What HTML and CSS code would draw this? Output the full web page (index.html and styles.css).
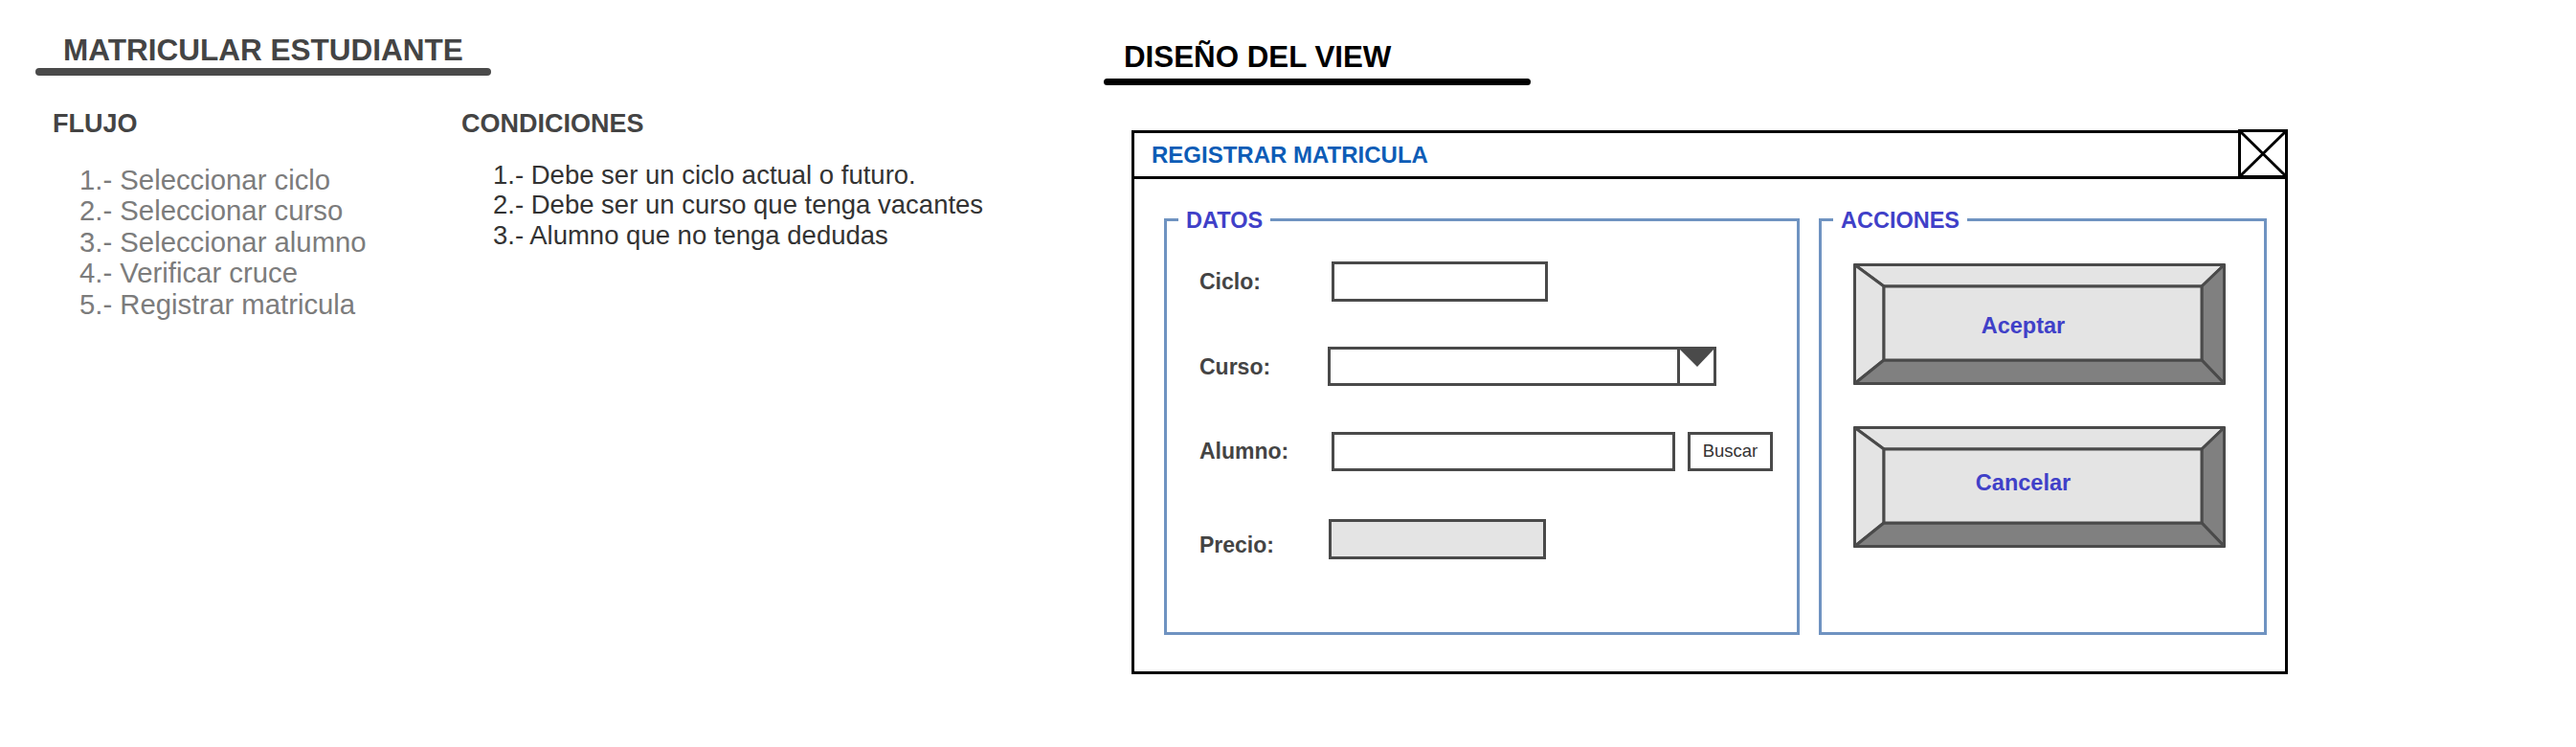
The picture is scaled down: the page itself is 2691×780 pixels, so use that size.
FILE: index.html
```html
<!DOCTYPE html>
<html lang="es">
<head>
<meta charset="utf-8">
<title>Matricular estudiante</title>
<link rel="stylesheet" href="styles.css">
</head>
<body>
<div class="page">
  <section class="spec">
    <h1 class="spec-title">MATRICULAR ESTUDIANTE</h1>
    <div class="rule rule-gray"></div>
    <div class="spec-cols">
      <div class="col col-flujo">
        <h2 class="col-title">FLUJO</h2>
        <ol class="steps">
          <li>1.- Seleccionar ciclo</li>
          <li>2.- Seleccionar curso</li>
          <li>3.- Seleccionar alumno</li>
          <li>4.- Verificar cruce</li>
          <li>5.- Registrar matricula</li>
        </ol>
      </div>
      <div class="col col-cond">
        <h2 class="col-title">CONDICIONES</h2>
        <ol class="conds">
          <li>1.- Debe ser un ciclo actual o futuro.</li>
          <li>2.- Debe ser un curso que tenga vacantes</li>
          <li>3.- Alumno que no tenga dedudas</li>
        </ol>
      </div>
    </div>
  </section>

  <section class="design">
    <h1 class="design-title">DISEÑO DEL VIEW</h1>
    <div class="rule rule-black"></div>

    <div class="window">
      <div class="titlebar">REGISTRAR MATRICULA</div>
      <div class="close-box">
        <svg width="52" height="51" viewBox="0 0 52 51">
          <rect x="1.5" y="1.5" width="49" height="48" fill="#fff" stroke="#000" stroke-width="3"/>
          <line x1="2" y1="2" x2="50" y2="49" stroke="#000" stroke-width="3"/>
          <line x1="50" y1="2" x2="2" y2="49" stroke="#000" stroke-width="3"/>
        </svg>
      </div>
      <div class="win-body">
        <fieldset class="group group-datos">
          <legend>DATOS</legend>
          <div class="form">
            <label class="lbl">Ciclo:</label>
            <input class="field field-ciclo" type="text">

            <label class="lbl">Curso:</label>
            <div class="select">
              <span class="select-arrow">
                <svg width="35" height="18" viewBox="0 0 35 18"><polygon points="0,0 35,0 18,18" fill="#4a4a4a"/></svg>
              </span>
            </div>

            <label class="lbl">Alumno:</label>
            <div class="field-row">
              <input class="field field-alumno" type="text">
              <button class="btn-buscar" type="button">Buscar</button>
            </div>

            <label class="lbl lbl-last">Precio:</label>
            <input class="field field-precio" type="text" disabled>
          </div>
        </fieldset>

        <fieldset class="group group-acciones">
          <legend>ACCIONES</legend>
          <div class="actions">
            <button class="bevel" type="button">
              <svg class="bevel-bg" width="389" height="127" viewBox="0 0 389 127">
                <g stroke="#4a4a4a" stroke-width="3" stroke-linejoin="round">
                  <polygon points="1.5,1.5 387.5,1.5 364,24 32,24" fill="#e4e4e4"/>
                  <polygon points="1.5,1.5 32,24 32,101 1.5,125.5" fill="#e4e4e4"/>
                  <polygon points="387.5,1.5 387.5,125.5 364,101 364,24" fill="#808080"/>
                  <polygon points="1.5,125.5 32,101 364,101 387.5,125.5" fill="#808080"/>
                  <rect x="32" y="24" width="332" height="77" fill="#e4e4e4"/>
                </g>
              </svg>
              <span class="bevel-text">Aceptar</span>
            </button>
            <button class="bevel" type="button">
              <svg class="bevel-bg" width="389" height="127" viewBox="0 0 389 127">
                <g stroke="#4a4a4a" stroke-width="3" stroke-linejoin="round">
                  <polygon points="1.5,1.5 387.5,1.5 364,24 32,24" fill="#e4e4e4"/>
                  <polygon points="1.5,1.5 32,24 32,101 1.5,125.5" fill="#e4e4e4"/>
                  <polygon points="387.5,1.5 387.5,125.5 364,101 364,24" fill="#808080"/>
                  <polygon points="1.5,125.5 32,101 364,101 387.5,125.5" fill="#808080"/>
                  <rect x="32" y="24" width="332" height="77" fill="#e4e4e4"/>
                </g>
              </svg>
              <span class="bevel-text bevel-text-up">Cancelar</span>
            </button>
          </div>
        </fieldset>
      </div>
    </div>
  </section>
</div>
</body>
</html>
```

FILE: styles.css
```css
* { box-sizing: border-box; }

html, body {
  margin: 0;
  background: #fff;
}

body {
  font-family: "Liberation Sans", Arial, sans-serif;
  color: #444;
}

.page {
  display: flex;
  align-items: flex-start;
}

/* ---------- left: specification ---------- */
.spec {
  width: 1153px;
  padding-left: 37px;
  flex: none;
}

.spec-title {
  margin: 0;
  padding: 34px 0 0 29px;
  font-size: 31.5px;
  line-height: 36px;
  font-weight: bold;
  color: #444;
}

.rule {
  border-radius: 4px;
}

.rule-gray {
  width: 476px;
  height: 8px;
  margin-top: 1px;
  background: #4a4a4a;
}

.spec-cols {
  display: flex;
  padding-left: 18px;
  margin-top: 34px;
}

.col-flujo { width: 427px; }

.col-title {
  margin: 0;
  font-size: 27px;
  line-height: 32px;
  font-weight: bold;
  color: #444;
}

.steps, .conds {
  list-style: none;
  margin: 0;
}

.steps {
  margin-top: 26.5px;
  padding-left: 28px;
  font-size: 29.3px;
  line-height: 32.5px;
  color: #7c7c7c;
}

.conds {
  margin-top: 21.5px;
  padding-left: 33px;
  font-size: 27.5px;
  line-height: 31.7px;
  color: #333;
}

/* ---------- right: design ---------- */
.design {
  flex: none;
  width: 1300px;
}

.design-title {
  margin: 0;
  padding: 41.5px 0 0 21px;
  font-size: 31.3px;
  line-height: 36px;
  font-weight: bold;
  color: #000;
}

.rule-black {
  width: 446px;
  height: 7px;
  margin-top: 4.5px;
  background: #000;
}

.window {
  position: relative;
  width: 1208px;
  margin: 47px 0 0 29px;
  border: 3px solid #000;
  background: #fff;
}

.titlebar {
  height: 48px;
  border-bottom: 3px solid #000;
  padding-left: 18px;
  font-size: 24px;
  line-height: 45px;
  font-weight: bold;
  color: #0d5cb6;
}

.close-box {
  position: absolute;
  top: -4px;
  right: -3px;
  width: 52px;
  height: 51px;
  line-height: 0;
}

.win-body {
  display: flex;
  gap: 20px;
  padding: 29.5px 19px 38px 31px;
}

.group {
  margin: 0;
  min-width: 0;
  padding: 0 0 0 12px;
  border: 3px solid #6f93c1;
}

.group legend {
  padding: 0 8px;
  font-size: 23.5px;
  line-height: 26px;
  font-weight: bold;
  color: #4040c8;
}

.group-datos { width: 664px; }
.group-acciones { width: 468px; }

/* form */
.form {
  display: grid;
  grid-template-columns: 138px auto;
  grid-template-rows: 42px 42px 42px 45px;
  row-gap: 46.5px;
  align-items: center;
  justify-items: start;
  padding: 30.5px 0 76.5px 22px;
}

.lbl {
  font-size: 23px;
  line-height: 26px;
  font-weight: bold;
  color: #444;
}

.lbl-last {
  align-self: end;
  margin-bottom: 2px;
}

.field {
  display: block;
  height: 42px;
  margin: 0;
  padding: 0;
  border: 3px solid #4a4a4a;
  border-radius: 0;
  background: #fff;
  outline: none;
}

.field-ciclo { width: 226px; }
.field-alumno { width: 359px; height: 41px; }
.field-precio {
  align-self: end;
  width: 227px;
  margin-left: -3px;
  background: #e4e4e4;
}

.select {
  display: flex;
  justify-content: flex-end;
  width: 406px;
  height: 41px;
  margin-left: -4px;
  border: 3px solid #4a4a4a;
  background: #fff;
}

.select-arrow {
  width: 38px;
  border-left: 3px solid #4a4a4a;
  line-height: 0;
}

.field-row {
  display: flex;
  gap: 13px;
  align-items: center;
}

.btn-buscar {
  width: 89px;
  height: 41px;
  margin: 0;
  padding: 0;
  border: 3px solid #4a4a4a;
  border-radius: 0;
  background: #fff;
  font-family: "Liberation Sans", Arial, sans-serif;
  font-size: 18.5px;
  color: #333;
}

/* actions */
.actions {
  display: flex;
  flex-direction: column;
  gap: 43px;
  padding: 32.5px 0 0 21px;
}

.bevel {
  position: relative;
  display: flex;
  align-items: center;
  justify-content: center;
  width: 389px;
  height: 127px;
  margin: 0;
  padding: 0 34px 0 0;
  border: 0;
  background: none;
  font-family: "Liberation Sans", Arial, sans-serif;
}

.bevel-bg {
  position: absolute;
  left: 0;
  top: 0;
}

.bevel-text {
  position: relative;
  font-size: 23.5px;
  font-weight: bold;
  color: #4040c8;
  padding-top: 4px;
}

.bevel-text-up {
  padding-top: 0;
  padding-bottom: 8px;
}
```
